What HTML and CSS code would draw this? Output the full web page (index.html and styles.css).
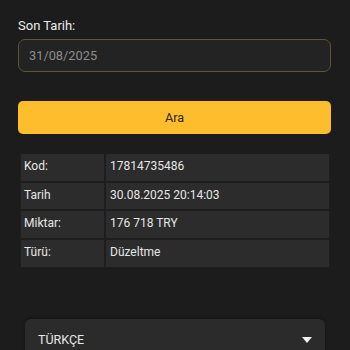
FILE: index.html
```html
<!DOCTYPE html>
<html>
<head>
<meta charset="utf-8">
<link rel="stylesheet" href="styles.css">
</head>
<body>
<div class="page">
  <div class="field">
    <label class="label">Son Tarih:</label>
    <div class="input">31/08/2025</div>
  </div>
  <button class="btn">Ara</button>
  <table class="info">
    <tr><td class="k">Kod:</td><td class="v">17814735486</td></tr>
    <tr><td class="k">Tarih</td><td class="v">30.08.2025 20:14:03</td></tr>
    <tr><td class="k">Miktar:</td><td class="v">176 718 TRY</td></tr>
    <tr><td class="k">Türü:</td><td class="v">Düzeltme</td></tr>
  </table>
  <div class="lang">
    <span>TÜRKÇE</span>
    <svg class="caret" width="10" height="6" viewBox="0 0 10 6"><path d="M0 0H10L5 6Z" fill="#f0f0f0"/></svg>
  </div>
</div>
</body>
</html>
```
FILE: styles.css
```css
html, body {
  margin: 0;
  padding: 0;
  background: #1c1c1c;
}
body {
  font-family: Roboto, "Noto Sans", sans-serif;
  color: #e8e8e8;
  height: 350px;
  overflow: hidden;
}
.page {
  padding: 17px 19px 0 18px;
}
.field {
  display: flex;
  flex-direction: column;
}
.label {
  font-size: 13px;
  line-height: 17px;
  color: #ececec;
  margin-bottom: 5px;
}
.input {
  height: 31px;
  border: 1px solid #5e5436;
  border-radius: 7px;
  background: #232323;
  color: #8c8c8c;
  font-size: 12.8px;
  display: flex;
  align-items: center;
  padding-left: 10px;
}
.btn {
  display: block;
  width: 100%;
  margin-top: 29px;
  height: 33px;
  border: none;
  border-radius: 5px;
  background: #fdbd2c;
  color: #33260a;
  font-family: Roboto, sans-serif;
  font-size: 12.6px;
  padding: 0;
}
.info {
  margin: 19px 1px 0 2px;
  width: 310px;
  border-collapse: separate;
  border-spacing: 0;
  background: #1e1e1e;
  font-size: 12px;
  color: #e6e6e6;
}
.info td {
  background: #2c2c2c;
  height: 26.7px;
  padding: 0 3px 3px 3px;
  box-sizing: border-box;
  border: 1px solid #1e1e1e;
}
.info tr {
  height: 28.7px;
}
.info td.k {
  width: 85px;
}
.info td.v {
  padding-left: 4px;
}
.lang {
  margin: 51px 6px 0 7px;
  height: 40px;
  background: #2b2b2b;
  border-radius: 6px;
  box-shadow: 0 -1px 3px rgba(0,0,0,0.35);
  display: flex;
  align-items: flex-start;
  justify-content: space-between;
  padding: 13px 13px 0 13px;
  box-sizing: border-box;
  font-size: 12.5px;
  color: #e8e8e8;
}
.caret {
  margin-top: 5px;
}
```
